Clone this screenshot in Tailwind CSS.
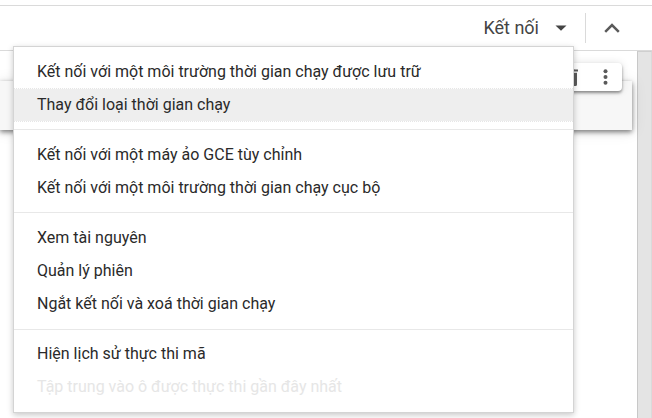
<!DOCTYPE html>
<html lang="vi">
<head>
<meta charset="utf-8">
<meta name="viewport" content="width=device-width, initial-scale=1">
<title>Kết nối</title>
<script src="https://cdn.jsdelivr.net/npm/@tailwindcss/browser@4"></script>
</head>
<body class="relative flex h-screen flex-col overflow-hidden bg-white font-[Roboto,sans-serif] text-[#2a2a2a]">
  <header class="mt-[5px] flex h-[46px] shrink-0 items-center justify-end border-y border-[#dadada] pr-8">
    <button type="button" aria-haspopup="menu" aria-expanded="true" class="flex items-center gap-4 pr-[18px] text-[18px] leading-6 text-[#444]">
      Kết nối
      <svg class="h-[6px] w-3" viewBox="0 0 12 6" fill="#444" aria-hidden="true"><path d="M0.5 0.5h11L6 5.8z"/></svg>
    </button>
    <span class="h-[30px] w-px bg-[#dadada]"></span>
    <button type="button" aria-label="Thu gọn" class="ml-[18px] flex h-6 w-4 items-center justify-center">
      <svg class="h-[10px] w-4" viewBox="0 0 16 10" fill="none" stroke="#5a5a5a" stroke-width="2.5" aria-hidden="true"><path d="M1.200 8.800L8 2l6.800 6.800"/></svg>
    </button>
  </header>

  <div class="flex min-h-0 flex-1">
    <main class="min-w-0 flex-1 pt-[30px] pr-[5px]">
      <section class="relative h-[49px] bg-[#f7f7f7] shadow-[0_2px_5px_rgba(0,0,0,0.5),0_1px_16px_rgba(0,0,0,0.1)]">
        <div class="absolute -top-[18px] right-[10px] flex h-7 items-center gap-[22px] rounded bg-white pr-[10px] pl-3 shadow-[0_2px_3px_rgba(0,0,0,0.4),0_0_8px_rgba(0,0,0,0.12)]">
          <button type="button" aria-label="Xóa ô">
            <svg class="block h-[18px] w-4" viewBox="0 0 16 18" fill="#5a5a5a" aria-hidden="true"><path d="M2 1.500h3.500l1-1h5l1 1H16v2H2zM3 4.700h12v11.800a1.500 1.500 0 0 1-1.500 1.500h-9A1.500 1.500 0 0 1 3 16.500z"/></svg>
          </button>
          <button type="button" aria-label="Thao tác khác">
            <svg class="block h-4 w-3" viewBox="0 0 12 16" fill="#5a5a5a" aria-hidden="true"><circle cx="5.500" cy="2.300" r="2"/><circle cx="5.500" cy="8" r="2"/><circle cx="5.500" cy="13.700" r="2"/></svg>
          </button>
        </div>
      </section>
    </main>
    <div class="w-[15px] border-t border-r border-l border-t-[#cfcfcf] border-r-[#dadada] border-l-[#c8c8c8] bg-[#e4e4e4]"></div>
  </div>

  <div role="menu" class="absolute top-[46px] right-[78px] left-[13px] border border-[#d4d4d4] bg-white py-2 text-[16px] shadow-[0_2px_6px_rgba(0,0,0,0.22)]">
    <button type="button" role="menuitem" class="block h-[33px] w-full px-[23px] text-left">Kết nối với một môi trường thời gian chạy được lưu trữ</button>
    <button type="button" role="menuitem" class="block h-[34px] w-full border-y border-dotted border-[#e6e6e6] bg-[#eee] bg-clip-padding px-[23px] text-left">Thay đổi loại thời gian chạy</button>
    <hr class="mt-[7px] mb-2 border-[#e8e8e8]">
    <button type="button" role="menuitem" class="block h-[33px] w-full px-[23px] text-left">Kết nối với một máy ảo GCE tùy chỉnh</button>
    <button type="button" role="menuitem" class="block h-[33px] w-full px-[23px] text-left">Kết nối với một môi trường thời gian chạy cục bộ</button>
    <hr class="my-2 border-[#e8e8e8]">
    <button type="button" role="menuitem" class="block h-[33px] w-full px-[23px] text-left">Xem tài nguyên</button>
    <button type="button" role="menuitem" class="block h-[33px] w-full px-[23px] text-left">Quản lý phiên</button>
    <button type="button" role="menuitem" class="block h-[34px] w-full px-[23px] text-left">Ngắt kết nối và xoá thời gian chạy</button>
    <hr class="mt-2 mb-[7px] border-[#e8e8e8]">
    <button type="button" role="menuitem" class="block h-[33px] w-full px-[23px] text-left">Hiện lịch sử thực thi mã</button>
    <button type="button" role="menuitem" disabled class="block h-[34px] w-full px-[23px] text-left text-[#e6e6e6]">Tập trung vào ô được thực thi gần đây nhất</button>
  </div>
</body>
</html>
